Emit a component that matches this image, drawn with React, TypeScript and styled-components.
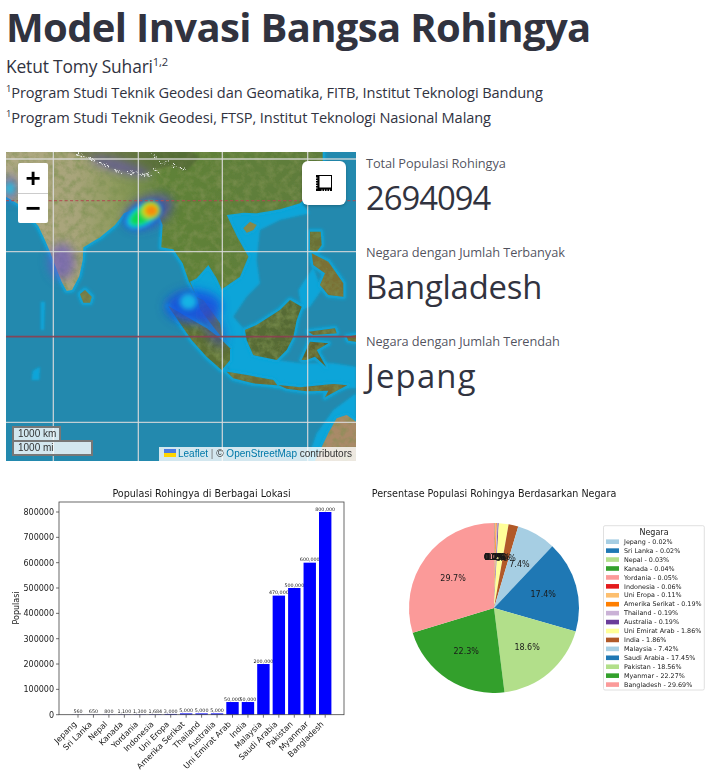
import styled, { createGlobalStyle } from 'styled-components';

const GlobalStyle = createGlobalStyle`
  html, body {
    margin: 0;
    background: #fff;
  }
  body {
    font-family: "Open Sans", "Noto Sans", sans-serif;
    color: #31333f;
  }
`;

const COUNTRIES: [string, number][] = [
  ['Jepang', 560],
  ['Sri Lanka', 650],
  ['Nepal', 800],
  ['Kanada', 1100],
  ['Yordania', 1300],
  ['Indonesia', 1684],
  ['Uni Eropa', 3000],
  ['Amerika Serikat', 5000],
  ['Thailand', 5000],
  ['Australia', 5000],
  ['Uni Emirat Arab', 50000],
  ['India', 50000],
  ['Malaysia', 200000],
  ['Saudi Arabia', 470000],
  ['Pakistan', 500000],
  ['Myanmar', 600000],
  ['Bangladesh', 800000],
];
const TOTAL = COUNTRIES.reduce((sum, c) => sum + c[1], 0);
const PAIRED = ['#a6cee3', '#1f78b4', '#b2df8a', '#33a02c', '#fb9a99', '#e31a1c', '#fdbf6f', '#ff7f00', '#cab2d6', '#6a3d9a', '#ffff99', '#b15928'];

// land outlines, in 3x map coordinates
const LAND: [string, string][] = [
  ['18,0 18,140 60,165 90,200 115,228 135,270 150,305 165,345 185,395 200,422 216,420 238,378 248,330 250,292 300,262 345,225 372,190 420,170 470,180 488,225 484,292 520,298 548,340 566,392 590,440 612,452 660,520 668,565 640,530 600,478 590,440 570,395 590,385 625,345 650,385 665,418 720,380 745,320 712,262 680,195 730,188 770,190 840,178 900,160 942,120 968,40 968,0', 'url(#mainland)'],
  ['505,468 560,500 620,535 660,565 690,595 690,630 665,660 620,620 575,570 540,520', '#5d7034'],
  ['735,540 770,525 840,480 870,450 905,470 890,510 880,560 860,600 830,630 760,615 740,570', '#566b36'],
  ['680,665 740,675 820,690 832,706 760,700 700,685', '#6c6c34'],
  ['835,705 900,712 1000,702 1042,706 1010,722 975,742 985,722 920,724 860,716', '#6f6a36'],
  ['905,630 930,575 985,580 950,600 978,650 945,620 918,630', '#60622f'],
  ['930,245 962,245 965,285 950,305 930,300', '#6b6f35'],
  ['935,310 985,335 1030,400 1030,440 985,435 960,405 975,370 940,345', '#7a7035'],
  ['240,432 255,420 275,440 270,458 250,458', '#747a46'],
  ['730,235 750,215 770,225 760,240 740,248', '#8a8648'],
  ['925,545 1005,535 1010,550 940,555', '#6b6c36'],
  ['1040,560 1068,555 1068,575 1045,572', '#6b6c36'],
  ['945,933 985,850 1010,805 1040,795 1068,815 1068,933', '#a98a68'],
];

const SHELF = [
  '680,195 770,185 905,160 930,190 840,210 780,240 770,330 780,400 740,440 700,500 735,540 740,570 700,640 690,665 640,540 600,470 570,395 625,345 665,418 720,380 745,320',
  '690,600 740,570 830,630 905,640 1000,640 1068,650 1068,715 830,715 690,680',
  '1068,730 1000,780 950,850 920,933 1068,933',
  '895,420 940,350 965,420 930,470 905,480',
  '98,662 120,650 118,690 95,690',
  '122,455 135,455 132,540 122,540',
];

const SNOW = [
  'M222,8 L250,14 M262,20 L286,30 M296,36 L322,44 M340,56 L360,62 M380,66 L404,60',
  'M412,70 L450,68 M456,52 L470,60 M478,38 L500,26 M508,44 L528,40 M536,50 L552,48 M450,12 L470,16',
];

function HeatMap() {
  return (
    <g>
      <g filter="url(#blurWide)">
        <ellipse cx="360" cy="50" rx="95" ry="18" fill="#6a55c8" opacity="0.6" transform="rotate(16 360 50)" />
        <ellipse cx="185" cy="335" rx="40" ry="55" fill="#6a55c8" opacity="0.65" />
        <ellipse cx="30" cy="115" rx="24" ry="42" fill="#4a5ad0" opacity="0.55" />
        <ellipse cx="580" cy="470" rx="85" ry="50" fill="#1b4fe0" opacity="0.85" />
        <ellipse cx="640" cy="530" rx="28" ry="65" fill="#3a40c0" opacity="0.5" transform="rotate(-25 640 530)" />
        <ellipse cx="445" cy="185" rx="78" ry="46" fill="#4a4ab8" opacity="0.7" transform="rotate(-25 445 185)" />
      </g>
      <g filter="url(#blurMid)">
        <ellipse cx="430" cy="195" rx="62" ry="36" fill="#1060f0" transform="rotate(-30 430 195)" />
        <ellipse cx="428" cy="197" rx="52" ry="28" fill="#12d0e0" transform="rotate(-30 428 197)" />
        <ellipse cx="30" cy="115" rx="14" ry="18" fill="#33b8d8" />
        <ellipse cx="565" cy="455" rx="26" ry="24" fill="#14b4e4" />
      </g>
      <g filter="url(#blurTight)">
        <ellipse cx="430" cy="195" rx="44" ry="22" fill="#10d850" transform="rotate(-32 430 195)" />
        <ellipse cx="452" cy="180" rx="28" ry="26" fill="#c8e410" />
        <ellipse cx="454" cy="182" rx="20" ry="18" fill="#f58a10" />
      </g>
    </g>
  );
}

function MapArt() {
  const vertical = [160, 415, 667, 923];
  const horizontal = [27, 305, 817];
  return (
    <MapSvg viewBox="18 6 1050 927" preserveAspectRatio="none">
      <defs>
        <filter id="soft"><feGaussianBlur stdDeviation="3" /></filter>
        <filter id="coast"><feGaussianBlur stdDeviation="5" /></filter>
        <filter id="blurWide"><feGaussianBlur stdDeviation="15" /></filter>
        <filter id="blurMid"><feGaussianBlur stdDeviation="8" /></filter>
        <filter id="blurTight"><feGaussianBlur stdDeviation="6" /></filter>
        <filter id="rough" x="-10%" y="-50%" width="120%" height="200%">
          <feTurbulence type="turbulence" baseFrequency="0.12" numOctaves="2" seed="3" result="jag" />
          <feDisplacementMap in="SourceGraphic" in2="jag" scale="22" />
        </filter>
        <filter id="satellite" x="0" y="0" width="100%" height="100%">
          <feTurbulence type="fractalNoise" baseFrequency="0.045" numOctaves="4" seed="7" result="noise" />
          <feColorMatrix in="noise" type="matrix" values="0 0 0 0 0.2  0 0 0 0 0.28  0 0 0 0 0.08  1.6 0 0 0 -0.62" result="tint" />
          <feComposite in="tint" in2="SourceGraphic" operator="in" result="clipped" />
          <feMerge>
            <feMergeNode in="SourceGraphic" />
            <feMergeNode in="clipped" />
          </feMerge>
        </filter>
        <linearGradient id="mainland" gradientUnits="userSpaceOnUse" x1="18" y1="0" x2="968" y2="0">
          <stop offset="0" stopColor="#b0a984" />
          <stop offset="0.22" stopColor="#a8a47a" />
          <stop offset="0.36" stopColor="#8c9a5c" />
          <stop offset="0.5" stopColor="#5f8238" />
          <stop offset="1" stopColor="#5e7c3c" />
        </linearGradient>
      </defs>
      <rect x="18" y="6" width="1050" height="927" fill="#2389ae" />
      <g fill="#0aa5d9" filter="url(#soft)">
        {SHELF.map(points => <polygon key={points} points={points} />)}
      </g>
      <g filter="url(#coast)" fill="#0aa5d9" stroke="#0aa5d9" strokeWidth="16" strokeLinejoin="round">
        {LAND.map(([points]) => <polygon key={points} points={points} />)}
      </g>
      <g filter="url(#satellite)">
        {LAND.map(([points, fill]) => <polygon key={points} points={points} fill={fill} />)}
      </g>
      <path d="M190,0 L260,22 L330,55 L410,72 L510,48 L560,62 L600,20 L560,0 Z" fill="#4e5c36" opacity="0.5" filter="url(#soft)" />
      <HeatMap />
      <g filter="url(#rough)">
        {SNOW.map(d => <path key={d} d={d} fill="none" stroke="#eef0f0" strokeWidth="4" strokeDasharray="7 4" />)}
      </g>
      {vertical.map(x => (
        <line key={x} x1={x} y1="6" x2={x} y2="933" stroke="#dcdcdc" strokeOpacity="0.85" strokeWidth="4" />
      ))}
      {horizontal.map(y => (
        <line key={y} x1="18" y1={y} x2="1068" y2={y} stroke="#dcdcdc" strokeOpacity="0.85" strokeWidth="4" />
      ))}
      <line x1="18" y1="152" x2="1068" y2="152" stroke="#b04a50" strokeOpacity="0.8" strokeWidth="4" strokeDasharray="9 7" />
      <line x1="18" y1="560" x2="1068" y2="560" stroke="#8c3f50" strokeOpacity="0.9" strokeWidth="5" />
    </MapSvg>
  );
}

function RulerIcon() {
  return (
    <svg width="16" height="16" viewBox="0 0 16 16">
      <path d="M0 0H16V16H0Z" fill="#000" />
      <path d="M3.5 1H15V12.5H3.5Z" fill="#fff" />
      <path d="M0 3H1.4M0 5.5H1.4M0 8H1.4M0 10.5H1.4M0 13H1.4M6 16V14.6M8.5 16V14.6M11 16V14.6M13.5 16V14.6" stroke="#fff" strokeWidth="0.9" />
    </svg>
  );
}

function BarChart() {
  const left = 59;
  const right = 344;
  const top = 502;
  const bottom = 714.7;
  const perUnit = (bottom - 512) / 800000;
  const ticks = [0, 100000, 200000, 300000, 400000, 500000, 600000, 700000, 800000];
  return (
    <ChartSvg viewBox="6 478 350 300" width="350" height="300">
      <text x={201.5} y={497} fontSize="9.6" textAnchor="middle">Populasi Rohingya di Berbagai Lokasi</text>
      <text transform="translate(19,608) rotate(-90)" fontSize="8" textAnchor="middle">Populasi</text>
      {COUNTRIES.map(([name, value], i) => {
        const cx = 78 + i * 15.45;
        const h = value * perUnit;
        return (
          <g key={name}>
            <rect x={cx - 6.2} y={bottom - h} width={12.4} height={h} fill="#0000ff" />
            <text x={cx} y={bottom - h - 1.2} fontSize="4.8" textAnchor="middle">{value.toLocaleString('en-US')}</text>
            <line x1={cx} y1={bottom} x2={cx} y2={bottom + 3} stroke="#333" strokeWidth="0.7" />
            <text transform={`translate(${cx - 1},${bottom + 10}) rotate(-45)`} fontSize="8" textAnchor="end">{name}</text>
          </g>
        );
      })}
      <rect x={left} y={top} width={right - left} height={bottom - top} fill="none" stroke="#444" strokeWidth="0.8" />
      {ticks.map(t => {
        const y = bottom - t * perUnit;
        return (
          <g key={t}>
            <line x1={left - 3} y1={y} x2={left} y2={y} stroke="#333" strokeWidth="0.7" />
            <text x={54} y={y + 2.9} fontSize="8" textAnchor="end">{t}</text>
          </g>
        );
      })}
    </ChartSvg>
  );
}

function PieChart() {
  const cx = 494;
  const cy = 608;
  const r = 85;
  let angle = 0;
  const slices = COUNTRIES.map(([name, value], i) => {
    const share = value / TOTAL;
    const start = angle;
    angle += share * Math.PI * 2;
    const end = angle;
    const mid = (start + end) / 2;
    const d = [
      `M${cx},${cy}`,
      `L${cx + r * Math.sin(start)},${cy - r * Math.cos(start)}`,
      `A${r},${r} 0 ${share > 0.5 ? 1 : 0} 1 ${cx + r * Math.sin(end)},${cy - r * Math.cos(end)}`,
      'Z',
    ].join(' ');
    return {
      name,
      d,
      share,
      color: PAIRED[i % PAIRED.length],
      lx: cx + r * 0.6 * Math.sin(mid),
      ly: cy - r * 0.6 * Math.cos(mid),
    };
  });
  return (
    <ChartSvg viewBox="366 478 349 300" width="349" height="300">
      <text x={494} y={497} fontSize="9.6" textAnchor="middle">Persentase Populasi Rohingya Berdasarkan Negara</text>
      {slices.map(s => <path key={s.name} d={s.d} fill={s.color} />)}
      {slices.map(s => (
        <text key={s.name} x={s.lx} y={s.ly + 2.9} fontSize="8" textAnchor="middle">
          {(s.share * 100).toFixed(1)}%
        </text>
      ))}
      <rect x={603.5} y={525.7} width={100.8} height={164.3} rx="1.5" fill="#fff" stroke="#d8d8d8" strokeWidth="0.8" />
      <text x={654} y={535} fontSize="8" textAnchor="middle">Negara</text>
      {slices.map((s, i) => {
        const y = 541.7 + i * 8.93;
        return (
          <g key={s.name}>
            <rect x={606} y={y - 2.3} width={13} height={4.6} fill={s.color} />
            <text x={624} y={y + 2.2} fontSize="6.4">
              {s.name} - {(s.share * 100).toFixed(2)}%
            </text>
          </g>
        );
      })}
    </ChartSvg>
  );
}

export default function App() {
  return (
    <>
      <GlobalStyle />
      <Page>
        <Title>Model Invasi Bangsa Rohingya</Title>
        <Author>Ketut Tomy Suhari<Sup>1,2</Sup></Author>
        <Affiliation><Sup>1</Sup>Program Studi Teknik Geodesi dan Geomatika, FITB, Institut Teknologi Bandung</Affiliation>
        <Affiliation><Sup>1</Sup>Program Studi Teknik Geodesi, FTSP, Institut Teknologi Nasional Malang</Affiliation>
        <TopRow>
          <MapFrame>
            <MapArt />
            <ZoomBar>
              <ZoomButton>+</ZoomButton>
              <ZoomButton $minus>−</ZoomButton>
            </ZoomBar>
            <MeasureButton><RulerIcon /></MeasureButton>
            <ScaleStack>
              <ScaleBar $width={49}>1000 km</ScaleBar>
              <ScaleBar $width={81} $closed>1000 mi</ScaleBar>
            </ScaleStack>
            <Attribution>
              <FlagIcon width="12" height="8" viewBox="0 0 12 8">
                <rect width="12" height="4" fill="#4c7be1" />
                <rect y="4" width="12" height="4" fill="#ffd500" />
              </FlagIcon>
              <AttrLink>Leaflet</AttrLink> <AttrBar>|</AttrBar> © <AttrLink>OpenStreetMap</AttrLink> contributors
            </Attribution>
          </MapFrame>
          <Metrics>
            <Metric>
              <MetricLabel>Total Populasi Rohingya</MetricLabel>
              <MetricValue $tracking={-1}>2694094</MetricValue>
            </Metric>
            <Metric>
              <MetricLabel>Negara dengan Jumlah Terbanyak</MetricLabel>
              <MetricValue $tracking={-0.2}>Bangladesh</MetricValue>
            </Metric>
            <Metric>
              <MetricLabel>Negara dengan Jumlah Terendah</MetricLabel>
              <MetricValue $tracking={1.2}>Jepang</MetricValue>
            </Metric>
          </Metrics>
        </TopRow>
        <ChartRow>
          <BarChart />
          <PieChart />
        </ChartRow>
      </Page>
    </>
  );
}

const Page = styled.div`
  width: 721px;
  height: 778px;
  box-sizing: border-box;
  padding: 0 6px;
  overflow: hidden;
`;

const Title = styled.h1`
  margin: 0;
  height: 53px;
  font-size: 40px;
  line-height: 53px;
  font-weight: 700;
  letter-spacing: -0.65px;
  white-space: nowrap;
`;

const Author = styled.div`
  height: 27px;
  font-size: 17.4px;
  line-height: 26px;
  letter-spacing: -0.15px;
`;

const Affiliation = styled.div`
  height: 25px;
  font-size: 14.6px;
  line-height: 25px;
  letter-spacing: -0.1px;
  white-space: nowrap;
`;

const Sup = styled.sup`
  font-size: 0.64em;
  line-height: 0;
`;

const TopRow = styled.div`
  display: flex;
  gap: 10px;
  margin-top: 22px;
`;

const MapFrame = styled.div`
  position: relative;
  width: 350px;
  height: 309px;
  overflow: hidden;
`;

const MapSvg = styled.svg`
  display: block;
  width: 350px;
  height: 309px;
`;

const ZoomBar = styled.div`
  position: absolute;
  left: 12px;
  top: 11px;
  width: 30px;
  border-radius: 2px;
  background: #fff;
`;

const ZoomButton = styled.div<{ $minus?: boolean }>`
  height: 30px;
  display: flex;
  align-items: center;
  justify-content: center;
  box-sizing: border-box;
  border-top: ${p => (p.$minus ? '1px solid #ccc' : 'none')};
  font-family: "Liberation Sans", Arial, sans-serif;
  font-size: 26px;
  font-weight: 700;
  color: #000;
`;

const MeasureButton = styled.div`
  position: absolute;
  left: 296px;
  top: 9px;
  width: 44px;
  height: 44px;
  border-radius: 6px;
  background: #fff;
  display: flex;
  align-items: center;
  justify-content: center;
  box-shadow: 0 1px 3px rgba(0, 0, 0, 0.25);
`;

const ScaleStack = styled.div`
  position: absolute;
  left: 6px;
  bottom: 5px;
  font-family: "Liberation Sans", Arial, sans-serif;
`;

const ScaleBar = styled.div<{ $width: number; $closed?: boolean }>`
  box-sizing: border-box;
  width: ${p => p.$width}px;
  height: ${p => (p.$closed ? 16 : 14)}px;
  padding-left: 4px;
  border: 2px solid #777;
  border-bottom: ${p => (p.$closed ? '2px solid #777' : 'none')};
  background: rgba(255, 255, 255, 0.8);
  font-size: 10px;
  line-height: 12px;
  color: #333;
  white-space: nowrap;
`;

const Attribution = styled.div`
  position: absolute;
  right: 0;
  bottom: 0;
  height: 14px;
  padding: 0 4px 0 5px;
  background: rgba(255, 255, 255, 0.8);
  font-family: "Liberation Sans", Arial, sans-serif;
  font-size: 10px;
  line-height: 14px;
  color: #333;
  white-space: nowrap;
`;

const FlagIcon = styled.svg`
  display: inline-block;
  margin-right: 2px;
`;

const AttrLink = styled.span`
  color: #0078a8;
`;

const AttrBar = styled.span`
  color: #777;
`;

const Metrics = styled.div`
  display: flex;
  flex-direction: column;
  gap: 10px;
`;

const Metric = styled.div`
  height: 79px;
`;

const MetricLabel = styled.div`
  height: 22px;
  font-size: 12.8px;
  line-height: 22px;
  letter-spacing: -0.1px;
  color: rgba(49, 51, 63, 0.85);
`;

const MetricValue = styled.div<{ $tracking: number }>`
  height: 48px;
  font-size: 32.8px;
  line-height: 48px;
  letter-spacing: ${p => p.$tracking}px;
`;

const ChartRow = styled.div`
  display: flex;
  gap: 10px;
  margin-top: 17px;
`;

const ChartSvg = styled.svg`
  display: block;
  flex: none;
  filter: blur(0.35px);

  text {
    font-family: "DejaVu Sans", sans-serif;
    fill: #1a1a1a;
  }
`;
